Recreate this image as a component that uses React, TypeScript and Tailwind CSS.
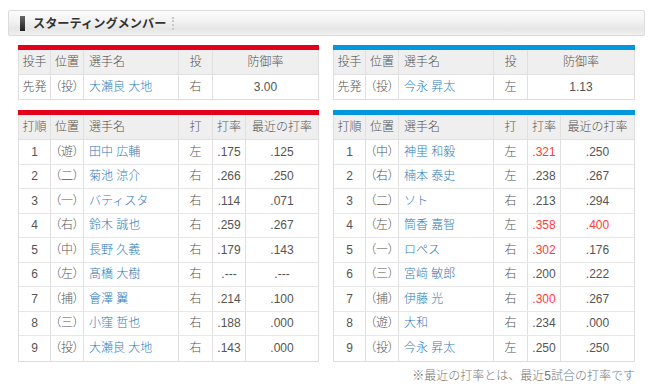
const FONT = "font-['Liberation_Sans','Noto_Sans_CJK_JP',sans-serif]";

type Batter = { pos: string; name: string; hand: string; avg: string; recent: string; avgHot?: boolean; recentHot?: boolean };

const HOME_PITCHER = { name: '大瀬良 大地', hand: '右', era: '3.00' };
const AWAY_PITCHER = { name: '今永 昇太', hand: '左', era: '1.13' };

const HOME: Batter[] = [
  { pos: '遊', name: '田中 広輔', hand: '左', avg: '.175', recent: '.125' },
  { pos: '二', name: '菊池 涼介', hand: '右', avg: '.266', recent: '.250' },
  { pos: '一', name: 'バティスタ', hand: '右', avg: '.114', recent: '.071' },
  { pos: '右', name: '鈴木 誠也', hand: '右', avg: '.259', recent: '.267' },
  { pos: '中', name: '長野 久義', hand: '右', avg: '.179', recent: '.143' },
  { pos: '左', name: '髙橋 大樹', hand: '右', avg: '.---', recent: '.---' },
  { pos: '捕', name: '會澤 翼', hand: '右', avg: '.214', recent: '.100' },
  { pos: '三', name: '小窪 哲也', hand: '右', avg: '.188', recent: '.000' },
  { pos: '投', name: '大瀬良 大地', hand: '右', avg: '.143', recent: '.000' },
];

const AWAY: Batter[] = [
  { pos: '中', name: '神里 和毅', hand: '左', avg: '.321', recent: '.250', avgHot: true },
  { pos: '右', name: '楠本 泰史', hand: '左', avg: '.238', recent: '.267' },
  { pos: '二', name: 'ソト', hand: '右', avg: '.213', recent: '.294' },
  { pos: '左', name: '筒香 嘉智', hand: '左', avg: '.358', recent: '.400', avgHot: true, recentHot: true },
  { pos: '一', name: 'ロペス', hand: '右', avg: '.302', recent: '.176', avgHot: true },
  { pos: '三', name: '宮﨑 敏郎', hand: '右', avg: '.200', recent: '.222' },
  { pos: '捕', name: '伊藤 光', hand: '右', avg: '.300', recent: '.267', avgHot: true },
  { pos: '遊', name: '大和', hand: '右', avg: '.234', recent: '.000' },
  { pos: '投', name: '今永 昇太', hand: '左', avg: '.250', recent: '.250' },
];

const cell = 'flex items-center justify-center border-r border-[#e0e0e0]';
const nameCell = 'flex items-center pl-[5px] border-r border-[#e0e0e0] text-[#2f7cbb]';

function PitcherTable({ bar, p }: { bar: string; p: typeof HOME_PITCHER }) {
  const cols = 'grid grid-cols-[32px_33px_95px_34px_1fr]';
  return (
    <div>
      <div className={`h-[5px] ${bar}`} />
      <div className="border-x border-b border-[#dedede]">
        <div className={`${cols} h-[25px] bg-[#efefef] border-b border-[#e0e0e0]`}>
          <div className={cell}>投手</div>
          <div className={cell}>位置</div>
          <div className="flex items-center pl-[5px] border-r border-[#e0e0e0]">選手名</div>
          <div className={cell}>投</div>
          <div className="flex items-center justify-center">防御率</div>
        </div>
        <div className={`${cols} h-[24px]`}>
          <div className={cell}>先発</div>
          <div className={`${cell} [font-feature-settings:'palt']`}>（投）</div>
          <div className={nameCell}>{p.name}</div>
          <div className={cell}>{p.hand}</div>
          <div className="flex items-center justify-center">{p.era}</div>
        </div>
      </div>
    </div>
  );
}

function LineupTable({ bar, rows }: { bar: string; rows: Batter[] }) {
  const cols = 'grid grid-cols-[32px_33px_95px_34px_33px_1fr]';
  return (
    <div>
      <div className={`h-[5px] ${bar}`} />
      <div className="border-x border-b border-[#dedede]">
        <div className={`${cols} h-[25px] bg-[#efefef] border-b border-[#e0e0e0]`}>
          <div className={cell}>打順</div>
          <div className={cell}>位置</div>
          <div className="flex items-center pl-[5px] border-r border-[#e0e0e0]">選手名</div>
          <div className={cell}>打</div>
          <div className={cell}>打率</div>
          <div className="flex items-center justify-center">最近の打率</div>
        </div>
        {rows.map((b, i) => (
          <div
            key={i}
            className={`${cols} h-[24.5px] ${i < rows.length - 1 ? 'border-b border-[#e6e6e6]' : ''}`}
          >
            <div className={cell}>{i + 1}</div>
            <div className={`${cell} [font-feature-settings:'palt']`}>（{b.pos}）</div>
            <div className={nameCell}>{b.name}</div>
            <div className={cell}>{b.hand}</div>
            <div className={`${cell} ${b.avgHot ? 'text-[#ff3b3b]' : ''}`}>{b.avg}</div>
            <div className={`flex items-center justify-center ${b.recentHot ? 'text-[#ff3b3b]' : ''}`}>{b.recent}</div>
          </div>
        ))}
      </div>
    </div>
  );
}

export default function App() {
  return (
    <div className={`w-[650px] h-[387px] bg-white text-[12px] font-light text-[#555] ${FONT}`}>
      {/* 見出し */}
      <div className="pt-[10px] pl-[8px] pr-[5px]">
        <div className="flex h-[26px] items-center rounded-[2px] border border-[#dcdcdc] bg-[linear-gradient(#fbfbfb,#f3f3f3_40%,#e6e6e6_75%,#f0f0f0)] pl-[11px]">
          <div className="h-[15px] w-[5px] bg-[linear-gradient(#666,#222)]" />
          <span className="ml-[8px] text-[12.2px] font-bold text-[#333] font-['Noto_Sans_CJK_JP',sans-serif]">スターティングメンバー</span>
          <div className="ml-[6px] h-[13px] border-l-2 border-dotted border-[#c8c8c8]" />
        </div>
      </div>

      <div className="flex gap-[14px] pl-[18px] pt-[9px]">
        <div className="w-[301px]">
          <PitcherTable bar="bg-[#e2001a]" p={HOME_PITCHER} />
        </div>
        <div className="w-[302px]">
          <PitcherTable bar="bg-[#0097df]" p={AWAY_PITCHER} />
        </div>
      </div>

      <div className="flex gap-[14px] pl-[18px] pt-[10px]">
        <div className="w-[301px]">
          <LineupTable bar="bg-[#e2001a]" rows={HOME} />
        </div>
        <div className="w-[302px]">
          <LineupTable bar="bg-[#0097df]" rows={AWAY} />
        </div>
      </div>

      <div className="w-[635px] pt-[5px] text-right text-[#777]">※最近の打率とは、最近5試合の打率です</div>
    </div>
  );
}
